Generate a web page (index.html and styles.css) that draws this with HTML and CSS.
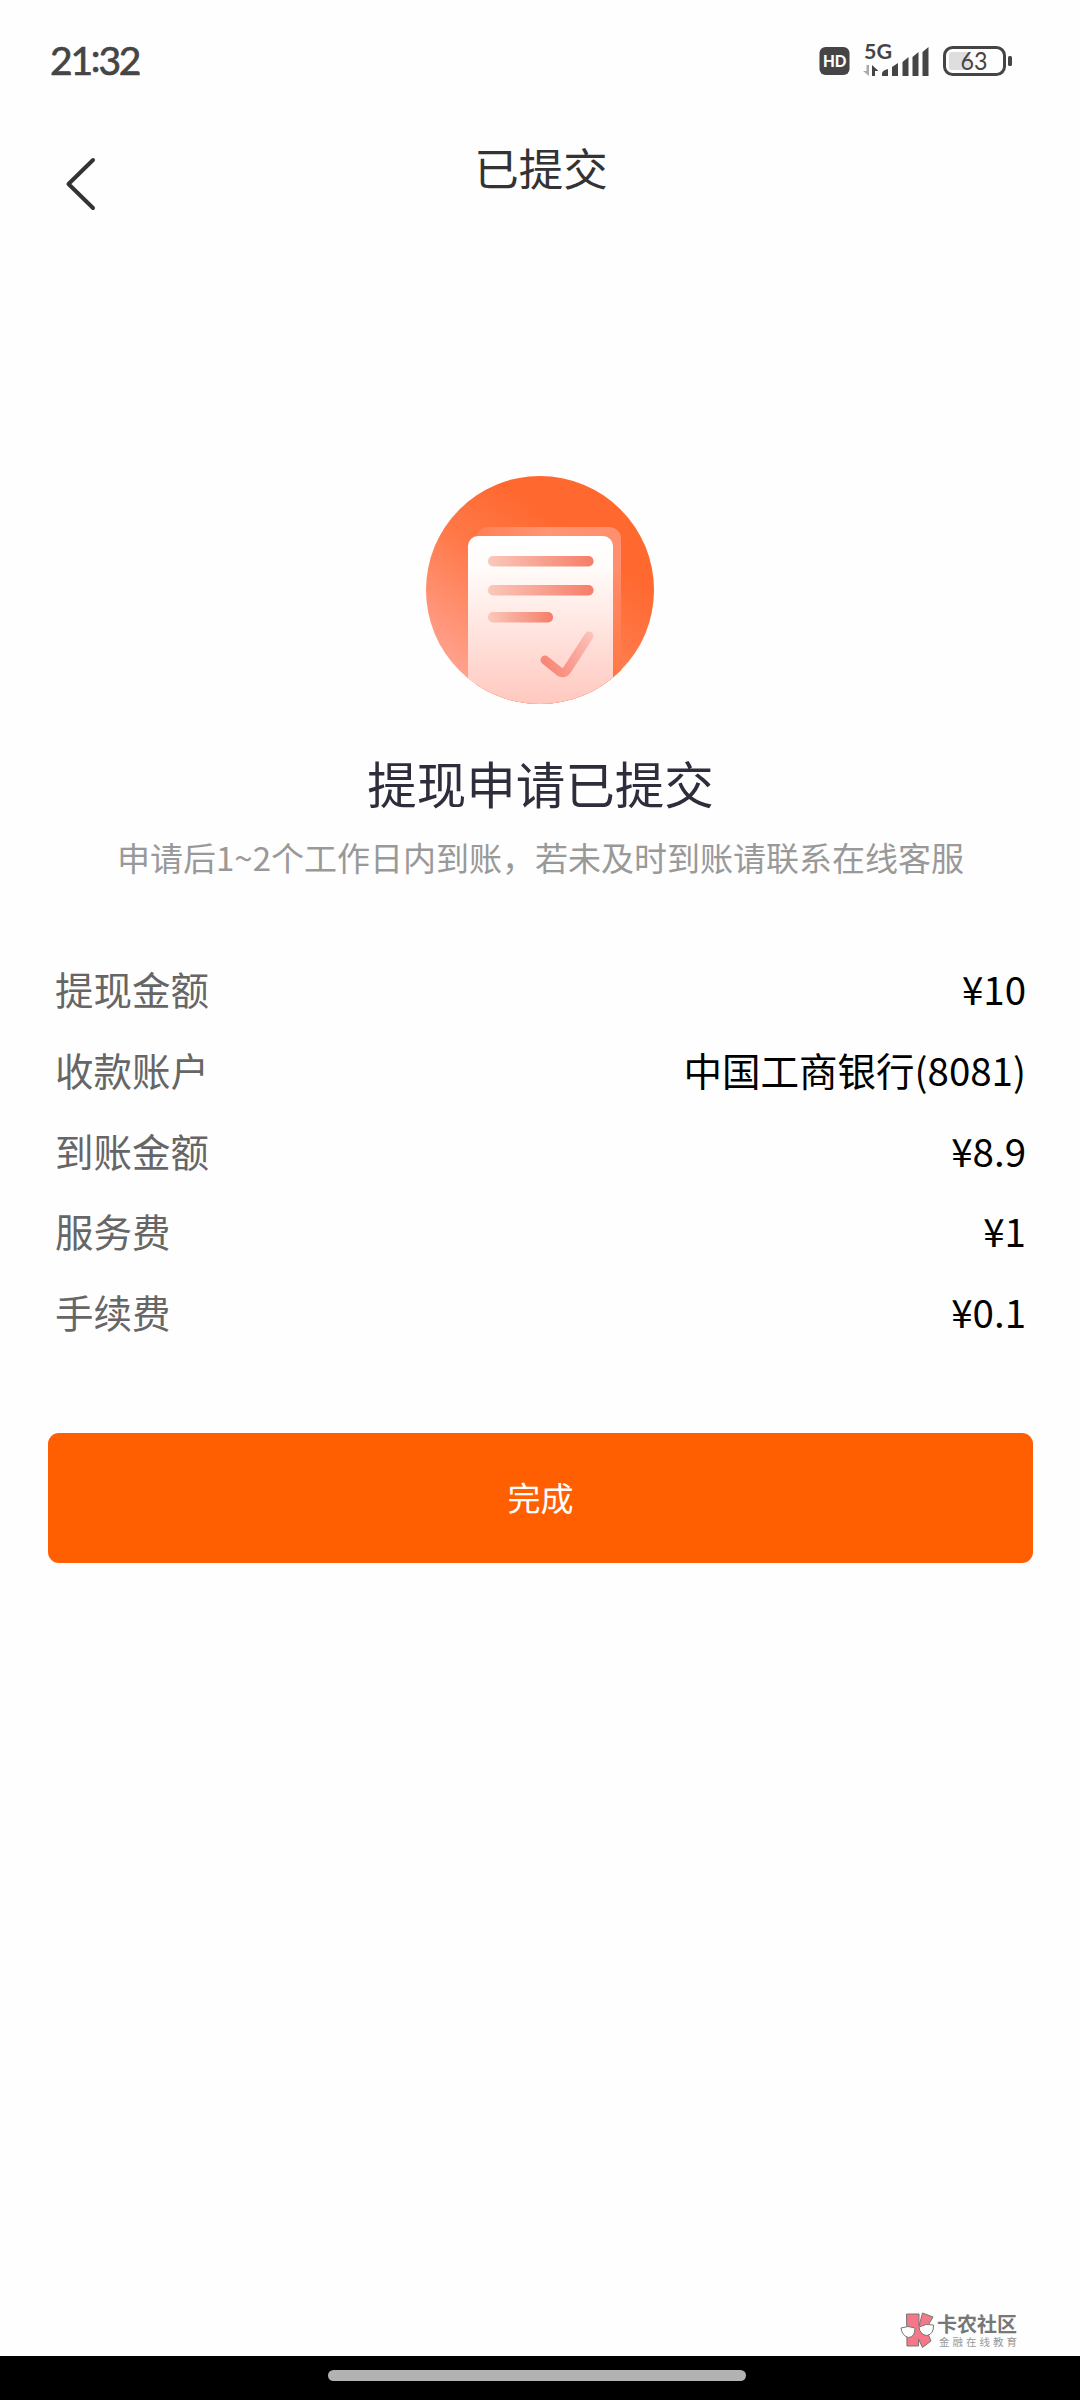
FILE: index.html
```html
<!DOCTYPE html>
<html lang="zh-CN">
<head>
<meta charset="utf-8">
<title>已提交</title>
<link rel="stylesheet" href="styles.css">
</head>
<body>
<div class="screen">
  <div class="status">
    <span class="clock">21<span class="colon">:</span>32</span>
    <svg class="indicators" width="196" height="44" viewBox="0 -4 196 44">
      <rect x="1.500" y="7" width="30" height="28" rx="6" fill="#454545"/>
      <text class="hd" x="5" y="26.500" textLength="23.500" lengthAdjust="spacingAndGlyphs">HD</text>
      <text class="net" x="46" y="19" textLength="28" lengthAdjust="spacingAndGlyphs">5G</text>
      <path d="M51 25V36L45 31H48.500V25Z" fill="#aaa"/>
      <path d="M54 36V25L60.500 31H57V36Z" fill="#454545"/>
      <g fill="#454545">
        <path d="M64 36V33Q65 30 70 29V36Z"/>
        <path d="M74 36V27L80 23V36Z"/>
        <path d="M84.500 36V22L90.500 17V36Z"/>
        <path d="M94.500 36V17L100.500 12V36Z"/>
        <path d="M104.500 36V12L110.500 7V36Z"/>
      </g>
      <rect x="126.500" y="7.500" width="60" height="27" rx="8" fill="none" stroke="#454545" stroke-width="3"/>
      <rect x="131" y="12" width="21" height="18" rx="3" fill="#dedede"/>
      <rect x="190" y="16" width="4" height="10" rx="1.500" fill="#454545"/>
      <text class="level" x="142.500" y="30" textLength="27" lengthAdjust="spacingAndGlyphs">63</text>
    </svg>
  </div>

  <header class="nav">
    <svg class="back" width="40" height="60" viewBox="0 0 40 60"><path d="M33 6L8.500 30L33 54" fill="none" stroke="#333" stroke-width="4" stroke-linecap="round" stroke-linejoin="round"/></svg>
    <h1 class="nav-title">已提交</h1>
  </header>

  <main class="content">
    <svg class="badge" width="228" height="228" viewBox="0 0 228 228">
      <defs>
        <linearGradient id="disc" x1="0.600" y1="0.200" x2="0.150" y2="0.850"><stop offset="0" stop-color="#ff682e"/><stop offset="0.400" stop-color="#ff7848"/><stop offset="1" stop-color="#ffa18d"/></linearGradient>
        <linearGradient id="sheet" x1="0" y1="0" x2="0" y2="1"><stop offset="0" stop-color="#fff"/><stop offset="0.150" stop-color="#fffdfb"/><stop offset="1" stop-color="#ffc0b6"/></linearGradient>
        <linearGradient id="shade" x1="0" y1="0" x2="1" y2="0"><stop offset="0" stop-color="#ff8055"/><stop offset="0.500" stop-color="#ff9573"/><stop offset="1" stop-color="#ff8f6e"/></linearGradient>
        <linearGradient id="shadeFade" x1="0" y1="0" x2="0" y2="1"><stop offset="0.200" stop-color="#ff6f39" stop-opacity="0"/><stop offset="0.800" stop-color="#ff7844"/></linearGradient>
        <linearGradient id="line" x1="0" y1="0" x2="1" y2="0"><stop offset="0" stop-color="#fac8bb"/><stop offset="1" stop-color="#f67d69"/></linearGradient>
        <linearGradient id="tick" gradientUnits="userSpaceOnUse" x1="120" y1="185" x2="168" y2="160"><stop offset="0" stop-color="#f8897a"/><stop offset="0.500" stop-color="#faa397"/><stop offset="1" stop-color="#fcc5bb"/></linearGradient>
        <clipPath id="round"><circle cx="114" cy="114" r="114"/></clipPath>
      </defs>
      <g clip-path="url(#round)">
        <rect width="228" height="228" fill="url(#disc)"/>
        <rect x="50" y="51" width="145" height="190" rx="12" fill="url(#shade)"/>
        <rect x="50" y="51" width="145" height="190" rx="12" fill="url(#shadeFade)"/>
        <rect x="42" y="60" width="145" height="190" rx="10" fill="url(#sheet)"/>
        <rect x="62" y="80" width="105.500" height="10.500" rx="5" fill="url(#line)"/>
        <rect x="62" y="109" width="105.500" height="10.500" rx="5" fill="url(#line)"/>
        <rect x="62" y="136" width="65" height="10.500" rx="5" fill="url(#line)"/>
        <path d="M119 184L134 196Q138 198 141 194L163 160" fill="none" stroke="url(#tick)" stroke-width="9" stroke-linecap="round" stroke-linejoin="round"/>
      </g>
    </svg>
    <h2 class="headline">提现申请已提交</h2>
    <p class="hint">申请后1~2个工作日内到账，若未及时到账请联系在线客服</p>
    <dl class="details">
      <div class="row"><dt>提现金额</dt><dd>¥10</dd></div>
      <div class="row"><dt>收款账户</dt><dd>中国工商银行(8081)</dd></div>
      <div class="row"><dt>到账金额</dt><dd>¥8.9</dd></div>
      <div class="row"><dt>服务费</dt><dd>¥1</dd></div>
      <div class="row"><dt>手续费</dt><dd>¥0.1</dd></div>
    </dl>
    <button class="done">完成</button>
  </main>

  <div class="brand">
    <svg width="36" height="38" viewBox="0 0 36 38">
      <g fill="#f4788a" stroke="#777" stroke-width="1">
        <path d="M6.500 2H19V14L22.500 1L33 5L26 17L31 29L22.500 35.500L18.500 27V34H7Z"/>
      </g>
      <g fill="#fff" stroke="#777" stroke-width="1">
        <path d="M1 16Q8 13 15 16Q15 25 8.500 25.500Q2 24 1 16Z"/>
        <path d="M19 15Q26 11 33.500 13Q34 22 27 23.500Q20 23 19 15Z"/>
      </g>
    </svg>
    <div class="brand-text">
      <span class="brand-name">卡农社区</span>
      <span class="brand-sub">金融在线教育</span>
    </div>
  </div>
  <div class="gesture"><i class="pill"></i></div>
</div>
</body>
</html>
```

FILE: styles.css
```css
* { box-sizing: border-box; margin: 0; padding: 0; }
body {
  background: #fefefe;
  font-family: "Noto Sans CJK SC", sans-serif;
  color: #000;
}
.screen { width: 1080px; height: 2400px; display: flex; flex-direction: column; overflow: hidden; }
.status { height: 120px; padding: 36px 66px 0 50px; display: flex; justify-content: space-between; align-items: flex-start; }
.clock { padding-top: 3px; font: 400 39px/42px Lato, sans-serif; letter-spacing: -2.2px; color: #454545; -webkit-text-stroke: 0.7px #454545; }
.colon { position: relative; top: -3px; }
.indicators { overflow: visible; }
.indicators text { font-family: Lato, sans-serif; fill: #454545; }
.indicators .hd { font-size: 16px; font-weight: 900; fill: #fff; }
.indicators .net { font-size: 20.500px; font-weight: 700; }
.indicators .level { font-size: 25px; font-weight: 400; }
.nav { height: 356px; display: grid; grid-template-columns: 160px 1fr 160px; align-items: start; }
.back { margin: 34px 0 0 60px; }
.nav-title { padding: 17px 0 0 2px; font-size: 44.500px; line-height: 60px; font-weight: 400; text-align: center; color: #333; }
.content { display: flex; flex-direction: column; align-items: center; padding: 0 47px 0 48px; }
.badge { margin-right: 1px; }
.headline { margin-top: 49px; font-size: 49.500px; line-height: 60px; font-weight: 400; color: #2d2d3c; }
.hint { margin-top: 24px; font-size: 33px; line-height: 40px; color: #999; white-space: nowrap; }
.details { width: 100%; margin-top: 71px; padding: 0 7px; font-size: 38.5px; }
.row { height: 80.700px; display: flex; justify-content: space-between; align-items: center; line-height: 60px; }
dt { color: #666; }
.done { width: 985px; height: 130px; margin-top: 82px; padding-bottom: 2px; border: 0; border-radius: 11px; background: #ff5f00; color: #fff; font: 400 33px/50px "Noto Sans CJK SC", sans-serif; }
.brand { height: 38px; margin: auto 60px 6px auto; display: flex; gap: 1px; }
.brand-text { display: flex; flex-direction: column; color: #777; white-space: nowrap; }
.brand-name { font-size: 20px; line-height: 24px; font-weight: 700; }
.brand-sub { padding-left: 2px; font-size: 10.500px; line-height: 12px; letter-spacing: 3px; color: #999; }
.gesture { height: 44px; background: #000; display: flex; justify-content: center; padding: 14px 6px 0 0; }
.pill { width: 418px; height: 11px; border-radius: 6px; background: #b2b2b2; }
```
